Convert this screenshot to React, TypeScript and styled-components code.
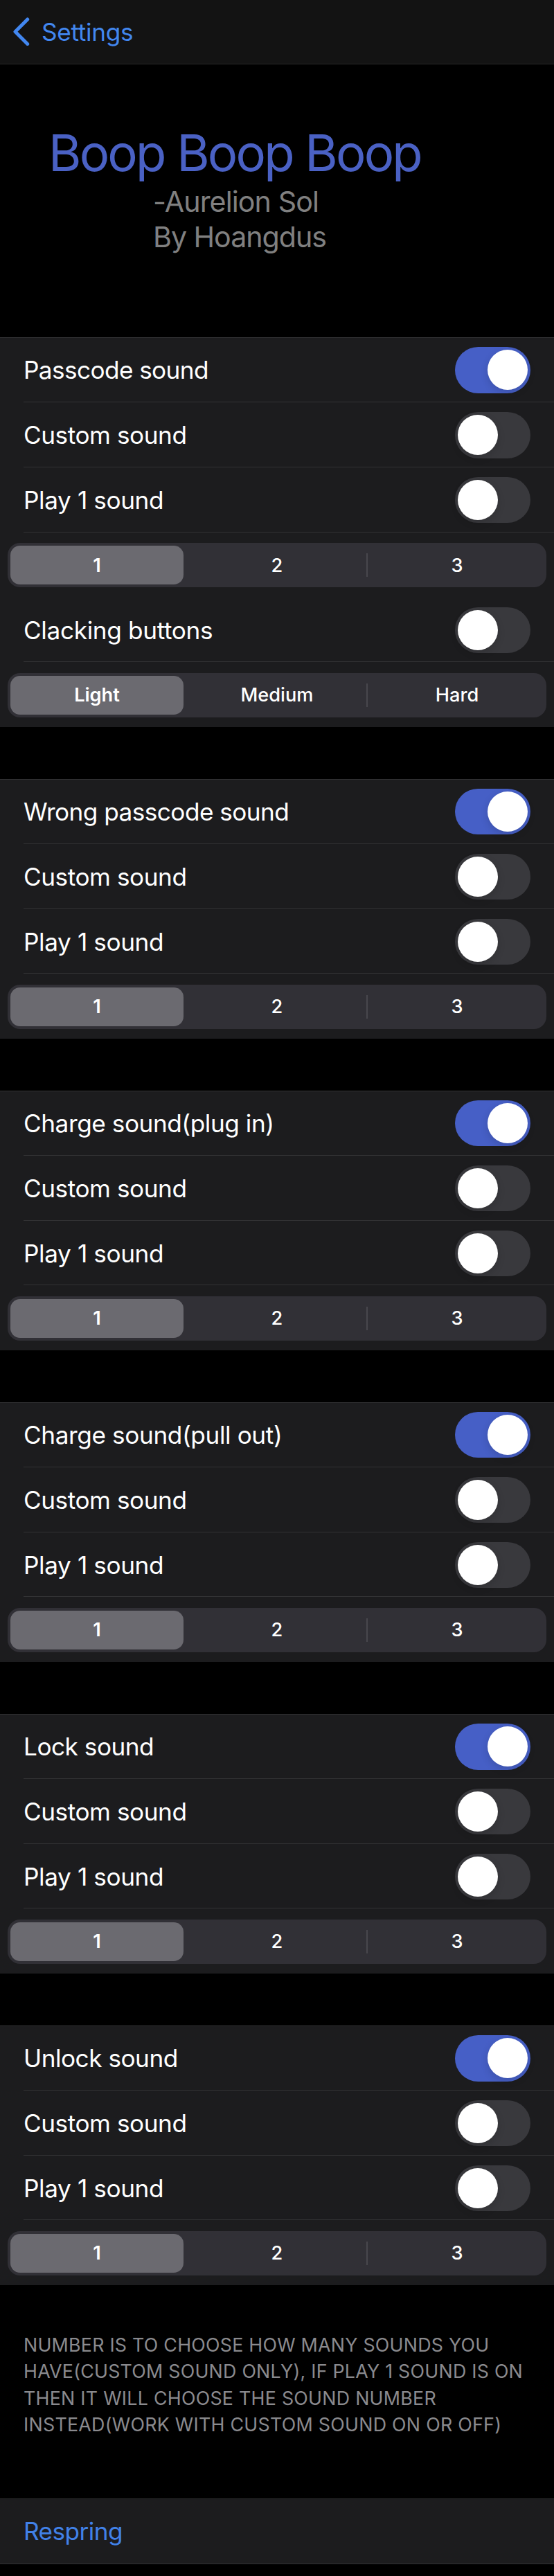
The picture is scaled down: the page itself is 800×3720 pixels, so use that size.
import { useState } from 'react'
import styled, { createGlobalStyle } from 'styled-components'

const GlobalStyle = createGlobalStyle`
* {
box-sizing: border-box;
}
body {
margin: 0;
background: #000;
font-family: Inter, "Liberation Sans", sans-serif;
-webkit-font-smoothing: antialiased;
}
button {
font: inherit;
color: inherit;
border: 0;
padding: 0;
background: none;
cursor: pointer;
}
`

const Page = styled.div`
width: 800px;
height: 3720px;
background: #000;
color: #fff;
overflow: hidden;
`

const NavBar = styled.header`
display: flex;
height: 93px;
padding: 0 0 1px 19px;
background: #131313;
border-bottom: 1px solid #262627;
`

const Back = styled.button`
display: flex;
align-items: center;
gap: 17px;
color: #4287f0;
font-size: 35.2px;
letter-spacing: -0.3px;
`

const Banner = styled.div`
height: 394px;
padding-top: 84px;
`

const Title = styled.h1`
margin: 0 0 1px;
padding-left: 70px;
font-size: 72.5px;
line-height: 88px;
font-weight: 400;
letter-spacing: -2.8px;
color: #4a61c4;
`

const Subtitle = styled.p<{ $spacing: number }>`
margin: 0;
padding-left: 221px;
font-size: 41.2px;
line-height: 51px;
letter-spacing: ${(props) => props.$spacing}px;
color: #808080;
`

const Section = styled.section`
margin-bottom: 74.6px;
background: #1c1c1e;
box-shadow: inset 0 1px #323234;

&:last-of-type {
margin-bottom: 66.6px;
}
`

const Row = styled.div`
display: flex;
align-items: center;
justify-content: space-between;
height: 93.87px;
margin-left: 34px;
padding: 2px 34px 0 0;
border-bottom: 1px solid #323234;
`

const Label = styled.span<{ $spacing: number }>`
font-size: 35.2px;
line-height: 44px;
letter-spacing: ${(props) => props.$spacing}px;
`

const Switch = styled.button<{ $on: boolean }>`
display: flex;
justify-content: ${(props) => (props.$on ? 'flex-end' : 'flex-start')};
align-items: center;
width: 109px;
height: 66.5px;
padding: 0 4px;
border-radius: 34px;
background: ${(props) => (props.$on ? '#465fc6' : '#39393d')};
`

const Knob = styled.span`
width: 58px;
height: 58px;
border-radius: 50%;
background: #fff;
box-shadow: 0 4px 12px rgba(0, 0, 0, 0.14);
`

const SegmentRow = styled.div`
display: flex;
align-items: center;
height: 93.87px;
padding: 1px 11px 0;
`

const Segments = styled.div`
display: grid;
grid-template-columns: 258px 262px 258px;
width: 778px;
height: 64.4px;
padding: 4px 0;
border-radius: 18px;
background: #313036;
`

const Segment = styled.button<{ $active: boolean; $divider: boolean }>`
display: flex;
align-items: center;
justify-content: center;
margin: ${(props) => (props.$active ? '0 4px' : '0')};
border-radius: ${(props) => (props.$active ? '14px' : '0')};
background: ${(props) => (props.$active ? '#6b6a70' : 'transparent')};
background: ${(props) => props.$divider && 'linear-gradient(#48474d, #48474d) right center / 2px 34px no-repeat'};
font-size: 27.2px;
font-weight: ${(props) => (props.$active ? 600 : 500)};
`

const Note = styled.p`
margin: 0;
height: 241px;
padding: 0 34px;
font-size: 26.8px;
line-height: 38.4px;
color: #8a8a8e;
`

const NoteLine = styled.span<{ $spacing: number }>`
display: block;
white-space: nowrap;
letter-spacing: ${(props) => props.$spacing}px;
`

const Respring = styled.button`
display: flex;
align-items: center;
width: 100%;
height: 95px;
padding-left: 34px;
background: #1c1c1e;
border-top: 1px solid #2c2c2e;
border-bottom: 1px solid #323234;
color: #4181e8;
font-size: 35.2px;
letter-spacing: -0.55px;
`

const numbers = ['1', '2', '3']

const groups = [
    { name: 'Passcode sound', spacing: -0.6, clacking: true },
    { name: 'Wrong passcode sound', spacing: -0.55 },
    { name: 'Charge sound(plug in)', spacing: -0.45 },
    { name: 'Charge sound(pull out)', spacing: -0.4 },
    { name: 'Lock sound', spacing: -0.5 },
    { name: 'Unlock sound', spacing: -0.5 },
]

const noteLines = [
    { text: 'NUMBER IS TO CHOOSE HOW MANY SOUNDS YOU', spacing: 0.24 },
    { text: 'HAVE(CUSTOM SOUND ONLY), IF PLAY 1 SOUND IS ON', spacing: 0.24 },
    { text: 'THEN IT WILL CHOOSE THE SOUND NUMBER', spacing: 0.26 },
    { text: 'INSTEAD(WORK WITH CUSTOM SOUND ON OR OFF)', spacing: 0.27 },
]

interface ToggleProps {
    label: string,
    spacing: number,
    initial?: boolean,
}

function ToggleRow({ label, spacing, initial = false }: ToggleProps) {
    const [on, setOn] = useState(initial)

    return (
        <Row>
            <Label $spacing={spacing}>{label}</Label>
            <Switch $on={on} role="switch" aria-checked={on} onClick={() => setOn(!on)}>
                <Knob />
            </Switch>
        </Row>
    )
}

function SegmentPicker({ options }: { options: string[] }) {
    const [picked, setPicked] = useState(0)

    return (
        <SegmentRow>
            <Segments>
                {options.map((option, idx) => (
                    <Segment
                        key={option}
                        $active={idx === picked}
                        $divider={idx === 1 && picked === 0}
                        onClick={() => setPicked(idx)}
                    >
                        {option}
                    </Segment>
                ))}
            </Segments>
        </SegmentRow>
    )
}

function App() {
    return (
        <>
        <GlobalStyle />
        <Page>
            <NavBar>
                <Back>
                    <svg width="24" height="42" viewBox="0 0 24 42" fill="none">
                        <path d="M20.7 3 L3 20.7 L20.7 38.4" stroke="currentColor" strokeWidth="5" strokeLinecap="round" strokeLinejoin="round" />
                    </svg>
                    Settings
                </Back>
            </NavBar>
            <Banner>
                <Title>Boop Boop Boop</Title>
                <Subtitle $spacing={-0.9}>-Aurelion Sol</Subtitle>
                <Subtitle $spacing={-1.05}>By Hoangdus</Subtitle>
            </Banner>
            {groups.map((group) => (
                <Section key={group.name}>
                    <ToggleRow label={group.name} spacing={group.spacing} initial />
                    <ToggleRow label="Custom sound" spacing={-0.45} />
                    <ToggleRow label="Play 1 sound" spacing={-0.4} />
                    <SegmentPicker options={numbers} />
                    {group.clacking && (
                        <>
                        <ToggleRow label="Clacking buttons" spacing={-0.35} />
                        <SegmentPicker options={['Light', 'Medium', 'Hard']} />
                        </>
                    )}
                </Section>
            ))}
            <Note>
                {noteLines.map((line) => <NoteLine key={line.text} $spacing={line.spacing}>{line.text}</NoteLine>)}
            </Note>
            <Respring>Respring</Respring>
        </Page>
        </>
    )
}

export default App
